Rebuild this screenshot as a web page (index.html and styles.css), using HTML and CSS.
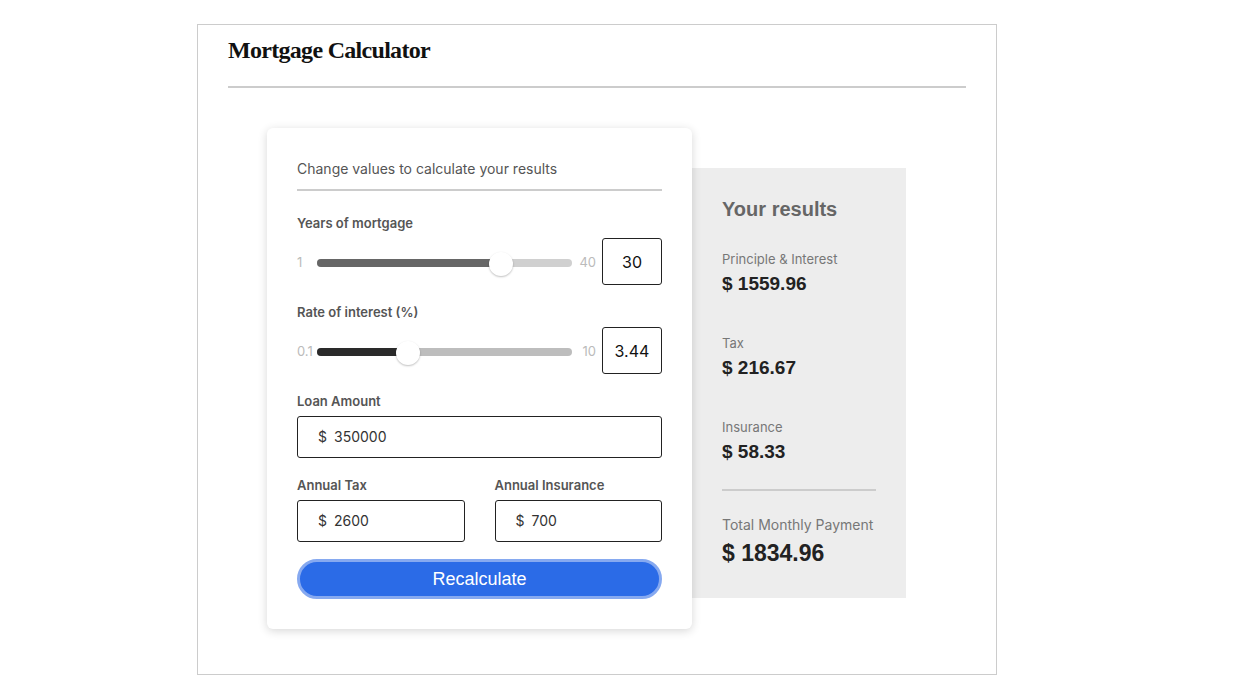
FILE: index.html
```html
<!DOCTYPE html>
<html>
<head>
<meta charset="utf-8">
<link rel="stylesheet" href="styles.css">
</head>
<body>
<div class="frame">
  <h1 class="title">Mortgage Calculator</h1>
  <div class="rule"></div>
  <div class="main">
    <div class="card">
      <div class="subtitle">Change values to calculate your results</div>
      <div class="label first">Years of mortgage</div>
      <div class="slider-row">
        <span class="min">1</span>
        <div class="track light">
          <div class="fill grey" style="width:72%"></div>
          <div class="thumb" style="left:72%"></div>
        </div>
        <span class="max">40</span>
        <div class="numbox">30</div>
      </div>
      <div class="label">Rate of interest (%)</div>
      <div class="slider-row">
        <span class="min">0.1</span>
        <div class="track mid">
          <div class="fill dark" style="width:35.5%"></div>
          <div class="thumb" style="left:35.5%"></div>
        </div>
        <span class="max">10</span>
        <div class="numbox">3.44</div>
      </div>
      <div class="label">Loan Amount</div>
      <div class="field"><span class="cur">$</span>350000</div>
      <div class="pair">
        <div class="col">
          <div class="label">Annual Tax</div>
          <div class="field"><span class="cur">$</span>2600</div>
        </div>
        <div class="col">
          <div class="label">Annual Insurance</div>
          <div class="field"><span class="cur">$</span>700</div>
        </div>
      </div>
      <button class="btn">Recalculate</button>
    </div>
    <div class="results">
      <h2 class="res-title">Your results</h2>
      <div class="res-label first">Principle &amp; Interest</div>
      <div class="res-value">$ 1559.96</div>
      <div class="res-label">Tax</div>
      <div class="res-value">$ 216.67</div>
      <div class="res-label">Insurance</div>
      <div class="res-value">$ 58.33</div>
      <div class="res-rule"></div>
      <div class="res-label total">Total Monthly Payment</div>
      <div class="res-value total">$ 1834.96</div>
    </div>
  </div>
</div>
</body>
</html>
```

FILE: styles.css
```css
* { box-sizing: border-box; }
html, body { margin: 0; padding: 0; background: #fff; }
body { font-family: "Inter", "Liberation Sans", sans-serif; color: #333; }

.frame {
  margin: 24px 0 0 197px;
  width: 800px;
  height: 651px;
  border: 1px solid #ccc;
  padding: 0 30px;
}
.title {
  margin: 0;
  padding-top: 12px;
  font-family: "Liberation Serif", "DejaVu Serif", serif;
  font-weight: bold;
  font-size: 24px;
  line-height: 26px;
  letter-spacing: -0.7px;
  color: #111;
}
.rule { height: 2px; background: #ccc; margin-top: 23px; }

.main { display: flex; align-items: flex-start; padding-left: 39px; margin-top: 40px; }

.card {
  position: relative;
  z-index: 2;
  width: 425px;
  background: #fff;
  border-radius: 6px;
  box-shadow: 0 2px 10px rgba(0,0,0,0.16);
  padding: 31px 30px 30px;
}
.subtitle {
  font-size: 14px;
  line-height: 20px;
  color: #555;
  padding-bottom: 10px;
  border-bottom: 2px solid #ccc;
}
.label {
  font-size: 13px;
  line-height: 16px;
  font-weight: 600;
  color: #555;
  margin-top: 19px;
  margin-bottom: 7px;
}
.label.first { margin-top: 24px; }

.slider-row { display: flex; align-items: center; height: 47px; }
.min { width: 20px; font-size: 13px; color: #bbb; }
.max { width: 30px; padding-right: 6px; text-align: right; font-size: 13px; color: #bbb; }
.track { position: relative; flex: 1; height: 8px; border-radius: 4px; margin-top: 2px; }
.track.light { background: #d0d0d0; }
.track.mid { background: #bdbdbd; }
.fill { height: 8px; border-radius: 4px; }
.fill.grey { background: #666; }
.fill.dark { background: #2a2a2a; }
.thumb {
  position: absolute;
  top: 50%;
  width: 24px; height: 24px;
  margin: -11px 0 0 -12px;
  border-radius: 50%;
  background: #fff;
  box-shadow: 0 1px 2px rgba(0,0,0,0.25);
}
.numbox {
  width: 60px; height: 47px;
  border: 1px solid #222;
  border-radius: 3px;
  display: flex; align-items: center; justify-content: center;
  font-size: 16px; color: #111;
}
.field {
  height: 42px;
  border: 1px solid #222;
  border-radius: 3px;
  display: flex; align-items: center;
  padding-left: 20px;
  padding-bottom: 1px;
  font-size: 14px; color: #333;
}
.cur { margin-right: 7px; }
.pair { display: flex; gap: 30px; }
.col { flex: 1; }

.btn {
  display: block;
  width: 100%;
  height: 40px;
  margin-top: 17px;
  border: 3px solid #86a9f0;
  border-radius: 22px;
  background: #2b6be7;
  color: #fff;
  font-family: "Liberation Sans", Arial, sans-serif;
  font-size: 18px;
  padding: 0;
}

.results {
  width: 214px;
  height: 430px;
  margin-top: 40px;
  background: #ededed;
  padding: 29px 30px 0;
}
.res-title {
  margin: 0;
  font-family: "Liberation Sans", Arial, sans-serif;
  font-size: 20px;
  line-height: 24px;
  font-weight: bold;
  color: #666;
}
.res-label { font-size: 13px; line-height: 16px; color: #777; margin-top: 40px; }
.res-label.first { margin-top: 30px; }
.res-value {
  font-family: "Liberation Sans", Arial, sans-serif;
  font-weight: bold;
  font-size: 19px;
  line-height: 22px;
  color: #222;
  margin-top: 6px;
}
.res-rule { height: 2px; background: #ccc; margin-top: 26px; }
.res-label.total { font-size: 14px; line-height: 18px; margin-top: 25px; }
.res-value.total { font-size: 23px; line-height: 26px; }
```
